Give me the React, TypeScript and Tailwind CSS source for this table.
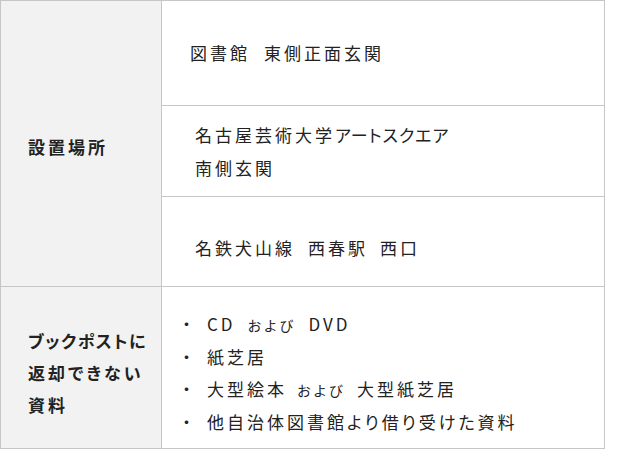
import React from "react";

const Sp = ({ w }: { w: number }) => <span className="inline-block" style={{ width: w }} />;

const Small = ({ children }: { children: React.ReactNode }) => (
  <span className="text-[14px] tracking-[2px] [font-feature-settings:normal]">{children}</span>
);

const items: React.ReactNode[] = [
  <>
    CD
    <Sp w={12} />
    <Small>および</Small>
    <Sp w={13} />
    DVD
  </>,
  <>紙芝居</>,
  <>
    大型絵本
    <Sp w={10} />
    <Small>および</Small>
    <Sp w={12} />
    大型紙芝居
  </>,
  <>他自治体図書館より借り受けた資料</>,
];

function App() {
  return (
    <div className="w-[618px] h-[458px] bg-white font-['Noto_Sans_CJK_JP',sans-serif] text-[17px] text-[#222] tracking-[3px] [font-feature-settings:'palt']">
      <div className="grid w-[605px] grid-cols-[161px_1fr] border border-[#c6c6c6]">
        {/* 設置場所 */}
        <div className="row-span-3 flex items-center border-r border-b border-[#c6c6c6] bg-[#f2f2f2] pl-[27px] pt-[6px] font-bold">
          設置場所
        </div>
        <div className="flex h-[105px] items-center border-b border-[#c6c6c6] pl-[28px]">
          図書館
          <Sp w={14} />
          東側正面玄関
        </div>
        <div className="flex h-[91px] items-center border-b border-[#c6c6c6] pl-[33px] leading-[33px]">
          <p>
            名古屋芸術大学<span className="tracking-[1px]">アートスクエア</span>
            <br />
            南側玄関
          </p>
        </div>
        <div className="flex h-[90px] items-center border-b border-[#c6c6c6] pl-[33px] pt-[13px]">
          名鉄犬山線
          <Sp w={13} />
          西春駅
          <Sp w={12} />
          西口
        </div>

        {/* 返却できない資料 */}
        <div className="flex h-[161px] items-center border-r border-[#c6c6c6] bg-[#f2f2f2] pl-[27px] pt-[10px] font-bold leading-[32px]">
          <p>
            <span className="tracking-[1.5px]">ブックポスト</span>に
            <br />
            返却できない
            <br />
            資料
          </p>
        </div>
        <div className="flex items-center pl-[16px] pt-[10px]">
          <ul className="leading-[32px]">
            {items.map((it, i) => (
              <li key={i} className="flex items-center">
                <span className="w-[29px] shrink-0 [font-feature-settings:normal]">・</span>
                <span className="flex items-baseline">{it}</span>
              </li>
            ))}
          </ul>
        </div>
      </div>
    </div>
  );
}

export default App;
